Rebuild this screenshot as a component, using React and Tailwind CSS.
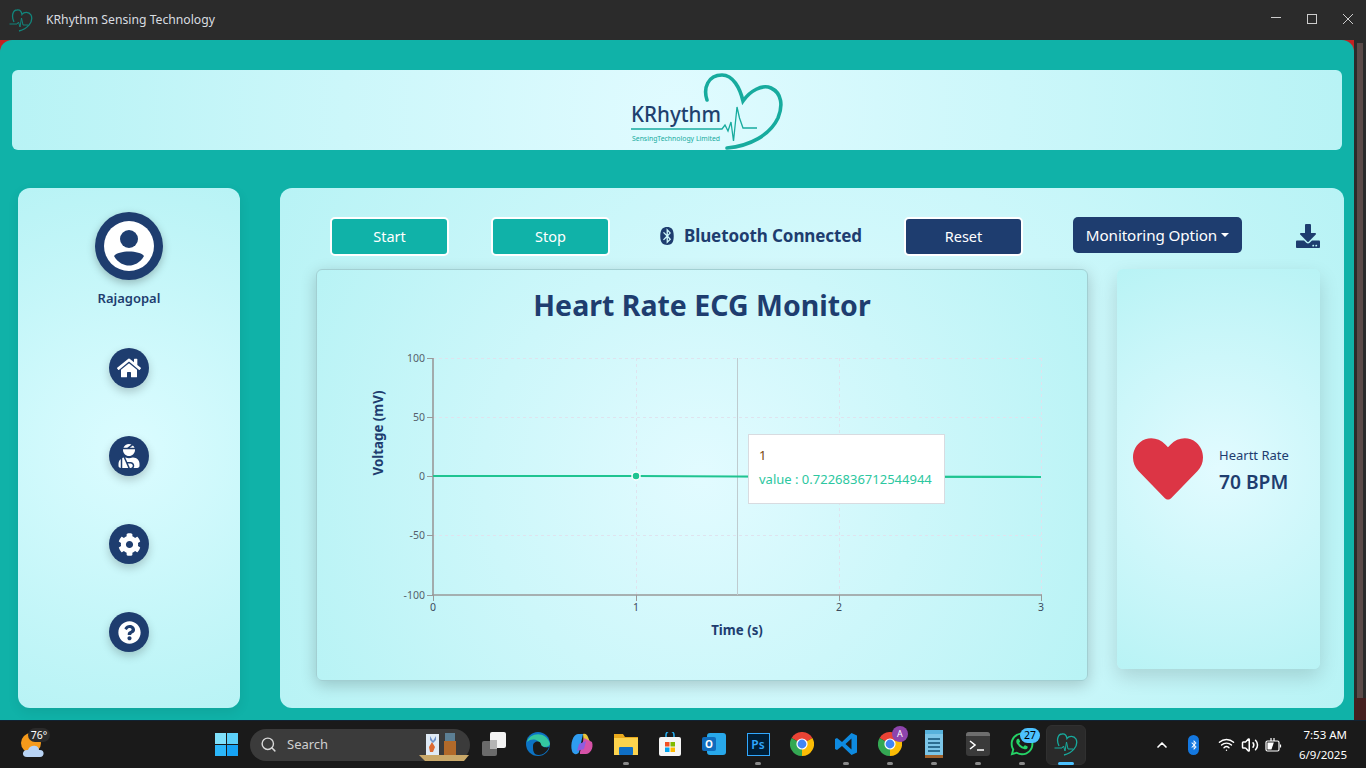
import React from "react";
import { FaHome, FaUserInjured, FaCog, FaQuestionCircle, FaDownload, FaBluetooth, FaHeart, FaWhatsapp, FaBluetoothB } from "react-icons/fa";
import { Search, Wifi, Volume2, ChevronUp } from "lucide-react";

const font = { fontFamily: '"Noto Sans", "Open Sans", sans-serif' };

function Logo({ color = "#17ab9e" }) {
  return (
    <svg width="24" height="24" viewBox="0 0 24 24" fill="none" stroke={color} strokeWidth="1.3" className="shrink-0">
      <path d="M5 14 C2 8 4 2 8 2 C11 1.5 12.5 4 13 6.5 C15 3.5 20 3.5 22 7 C25 14 18 21 10 23" />
      <path d="M0.5 16 H8 L9.5 14 L11 19 L12.5 10 L14 17 H19" strokeWidth="1" />
    </svg>
  );
}

function BrandLogo() {
  return (
    <svg width="160" height="80" viewBox="628 70 160 80" fill="none">
      <path d="M707 100 C703 88 708 75 722 75 C733 75 740 88 743 101 C750 91 762 84 771 88 C782 93 783 106 778 118 C770 135 750 146 727 148" stroke="#17ab9e" strokeWidth="3.6" strokeLinecap="round" />
      <path d="M631 129 H722 L725 125 L728 131 L731 122 L733.5 141 L737 107 L739.5 118 L743 128 H757" stroke="#17ab9e" strokeWidth="1.3" />
      <text x="631" y="122" fontSize="21" fontWeight="500" fill="#1e3f6e" textLength="90" lengthAdjust="spacingAndGlyphs" style={font}>KRhythm</text>
      <text x="632" y="141" fontSize="7" fill="#17ab9e" textLength="88" lengthAdjust="spacingAndGlyphs" style={font}>SensingTechnology Limited</text>
    </svg>
  );
}

function RoundIcon({ children }) {
  return (
    <div className="w-10 h-10 rounded-full bg-[#1e3d6f] flex items-center justify-center shadow-[0_4px_10px_rgba(0,0,0,0.2)] text-white">
      {children}
    </div>
  );
}

function Sidebar() {
  return (
    <div className="w-[222px] h-[520px] shrink-0 rounded-xl bg-[radial-gradient(circle,#dbfcff,#b8f3f5)] flex flex-col items-center pt-6 shadow-[0_4px_12px_rgba(0,0,0,0.08)]">
      <div className="w-[68px] h-[68px] rounded-full bg-[#1e3d6f] flex items-center justify-center shadow-[0_3px_8px_rgba(0,0,0,0.25)]">
        <svg width="50" height="50" viewBox="0 0 50 50">
          <circle cx="25" cy="25" r="25" fill="#fff" />
          <circle cx="25" cy="18" r="9" fill="#1e3d6f" />
          <path d="M10 35 C14 29 36 29 40 35 C36 42 30 44.5 25 44.5 C20 44.5 14 42 10 35Z" fill="#1e3d6f" />
        </svg>
      </div>
      <div className="mt-[9px] text-[13px] leading-[18px] font-semibold text-[#1e3d6f]">Rajagopal</div>
      <div className="mt-[41px] flex flex-col gap-[48px]">
        <RoundIcon><FaHome size={24} /></RoundIcon>
        <RoundIcon><FaUserInjured size={24} /></RoundIcon>
        <RoundIcon><FaCog size={23} /></RoundIcon>
        <RoundIcon><FaQuestionCircle size={23} /></RoundIcon>
      </div>
    </div>
  );
}

function Btn({ children, className }) {
  return (
    <button className={"w-[119px] h-[39px] rounded-[5px] border-2 border-white text-white text-[14.5px] flex items-center justify-center " + className}>
      {children}
    </button>
  );
}

function Chart() {
  const xs = [433, 636, 839, 1041];
  const ys = [[358, "100"], [417, "50"], [476, "0"], [535, "-50"], [595, "-100"]];
  return (
    <svg width="770" height="310" viewBox="317 340 770 310" className="block" style={font}>
      {ys.slice(0, 4).map(([y]) => (
        <line key={y} x1="433" x2="1041" y1={y + 0.5} y2={y + 0.5} stroke="#dfe3ee" strokeDasharray="3 3" />
      ))}
      {xs.slice(1).map((x) => (
        <line key={x} x1={x + 0.5} x2={x + 0.5} y1="358" y2="595" stroke="#dfe3ee" strokeDasharray="3 3" />
      ))}
      <line x1="433" x2="433" y1="358" y2="595" stroke="#999" strokeWidth="1.6" />
      <line x1="432" x2="1042" y1="595" y2="595" stroke="#999" strokeWidth="1.6" />
      {ys.map(([y, t]) => (
        <g key={t}>
          <line x1="427" x2="433" y1={y + 0.5} y2={y + 0.5} stroke="#999" />
          <text x="425" y={y + 4} textAnchor="end" fontSize="10.5" fill="#555f6b">{t}</text>
        </g>
      ))}
      {xs.map((x, i) => (
        <g key={x}>
          <line x1={x + 0.5} x2={x + 0.5} y1="595" y2="601" stroke="#999" />
          <text x={x} y="611" textAnchor="middle" fontSize="10.5" fill="#3d4a5c">{i}</text>
        </g>
      ))}
      <line x1="737.5" x2="737.5" y1="358" y2="595" stroke="#bfcbcf" />
      <path d="M433 476 H636 L737 476.5 L1041 477" stroke="#1fc491" strokeWidth="2.2" fill="none" />
      <circle cx="636" cy="476" r="4" fill="#1fc491" stroke="#fff" strokeWidth="1.5" />
      <text transform="translate(383 433) rotate(-90)" textAnchor="middle" fontSize="13.3" fontWeight="700" fill="#1e3d6f">Voltage (mV)</text>
      <text x="737" y="635" textAnchor="middle" fontSize="13.3" fontWeight="700" fill="#1e3d6f">Time (s)</text>
    </svg>
  );
}

function Panel() {
  return (
    <div className="w-[1064px] h-[520px] shrink-0 rounded-xl bg-[radial-gradient(circle,#dffbff,#b8f3f5)] pt-[29px]">
      <div className="flex items-start h-[52px]">
        <Btn className="ml-[50px] bg-[#10b2a8]">Start</Btn>
        <Btn className="ml-[42px] bg-[#10b2a8]">Stop</Btn>
        <div className="ml-[48px] w-[246px] h-[38px] flex items-center text-[#1e3d6f]">
          <FaBluetooth size={18} />
          <span className="ml-[8px] text-[17px] font-bold tracking-[-0.1px]">Bluetooth Connected</span>
        </div>
        <Btn className="bg-[#1e3d6f]">Reset</Btn>
        <button className="ml-[50px] w-[169px] h-9 rounded-[5px] bg-[#1e3d6f] text-white text-[15.2px] flex items-center justify-center tracking-[-0.1px]">
          Monitoring Option
          <span className="ml-[4px] w-0 h-0 border-x-[4.5px] border-x-transparent border-t-[4.5px] border-t-white" />
        </button>
        <div className="ml-[54px] mt-[7px] text-[#1e3d6f]"><FaDownload size={24} /></div>
      </div>
      <div className="flex items-start ml-[37px]">
        <div className="relative w-[772px] h-[412px] -ml-[1px] rounded-md border border-[#a2cfd2] bg-[radial-gradient(circle,#e2fbff,#b8f3f5)] shadow-[0_4px_16px_rgba(0,0,0,0.2)]">
          <h1 className="pt-4 h-[70px] text-center text-[28.5px] leading-[38px] font-bold text-[#1e3d6f]">Heart Rate ECG Monitor</h1>
          <Chart />
          <div className="absolute left-[431px] top-[164px] w-[197px] h-[70px] bg-white border border-[#d8dbe0] pl-[10px] pt-[10px]">
            <div className="text-[13px] leading-[20px] text-[#7a4a10]">1</div>
            <div className="mt-[5px] text-[13px] leading-[18px] text-[#2cc7a0] whitespace-nowrap">value : 0.7226836712544944</div>
          </div>
        </div>
        <div className="ml-[29px] w-[203px] h-[400px] rounded-md bg-[radial-gradient(circle,#e2fbff,#b8f3f5)] shadow-[0_8px_20px_rgba(0,0,0,0.14)] flex items-center pl-4">
          <FaHeart size={70} className="text-[#dc3545] shrink-0" />
          <div className="ml-4 pt-[3px] text-[#1e3d6f]">
            <div className="text-[13px] leading-[18px]">Heartt Rate</div>
            <div className="mt-[4px] text-[19.2px] leading-[28px] font-semibold">70 BPM</div>
          </div>
        </div>
      </div>
    </div>
  );
}

const Slot = ({ children, dot, active }) => (
  <div className={"relative w-11 h-12 shrink-0 flex items-center justify-center"}>
    {active && <div className="absolute left-[2px] top-1 w-10 h-10 rounded-md bg-[#2a2a2a] border border-[#303030]" />}
    <div className="relative flex items-center justify-center mb-[1px]">{children}</div>
    {dot && <div className="absolute left-[19px] bottom-[4px] w-[6px] h-[3px] rounded-full bg-[#8a8a8a]" />}
    {active && <div className="absolute left-[14px] bottom-[4px] w-4 h-[3px] rounded-full bg-[#4cc2ff]" />}
  </div>
);

const ChromeIcon = () => (
  <svg width="24" height="24" viewBox="0 0 24 24">
    <path d="M12 12 L22.4 6 A12 12 0 0 0 1.6 6Z" fill="#ea4335" />
    <path d="M12 12 L1.6 6 A12 12 0 0 0 12 24Z" fill="#34a853" />
    <path d="M12 12 L12 24 A12 12 0 0 0 22.4 6Z" fill="#fbbc05" />
    <circle cx="12" cy="12" r="5.6" fill="#fff" />
    <circle cx="12" cy="12" r="4.4" fill="#4285f4" />
  </svg>
);

function Taskbar() {
  return (
    <div className="h-12 bg-[#1a1a1a] flex items-center text-white shrink-0 border-t border-[#123]">
      <div className="relative w-[204px] h-12 shrink-0">
        <svg width="26" height="26" viewBox="0 0 26 26" className="absolute left-[20px] top-[11px]">
          <circle cx="11" cy="11" r="10" fill="#f59a1b" />
          <path d="M7 25 C1 25 2 17 8 18 C10 12 19 13 19 18 C25 17 25 25 20 25Z" fill="#b9d4f5" />
        </svg>
        <div className="absolute left-[28px] top-[7px] w-[22px] h-[14px] rounded-full bg-[#2a2a2a] text-[10.5px] leading-[14px] text-center">76°</div>
      </div>
      <Slot>
        <div className="grid grid-cols-2 gap-[1px] w-[23px] h-[23px]">
          <div className="bg-[#7fe0fb]" /><div className="bg-[#5cd0fa]" /><div className="bg-[#2cb7fa]" /><div className="bg-[#16a3f5]" />
        </div>
      </Slot>
      <div className="ml-[2px] w-[220px] h-8 rounded-full bg-[#3b3b3b] shrink-0 flex items-center pl-[10px] relative mr-[2px]">
        <Search size={17} className="text-[#d8d8d8]" />
        <span className="ml-[10px] text-[13px] text-[#cfcfcf]">Search</span>
        <svg width="54" height="30" viewBox="0 0 54 30" className="absolute right-[-1px] top-[2px]">
          <path d="M2 24 H52 L47 30 H8Z" fill="#c9a869" />
          <rect x="9" y="3" width="13" height="21" fill="#dfeaf5" />
          <path d="M12 16 L15 11 L18 16 L16 21 H13Z" fill="#dd6a32" />
          <path d="M13 5 L16 10 L19 5 V9 L16 12 L13 9Z" fill="#6d91c9" />
          <rect x="27" y="10" width="12" height="14" fill="#b26a2a" />
          <path d="M28 2 H38 V10 H28Z" fill="#5c7f94" />
        </svg>
      </div>
      <Slot>
        <div className="relative w-6 h-6">
          <div className="absolute left-0 bottom-0 w-[15px] h-[15px] rounded-[2px] bg-[#6b6b6b]" />
          <div className="absolute right-0 top-0 w-[16px] h-[16px] rounded-[2px] bg-[#f3f3f3]" />
          <div className="absolute left-[8px] top-[8px] w-[7px] h-[9px] bg-[#b5b5b5]" />
        </div>
      </Slot>
      <Slot>
        <svg width="24" height="24" viewBox="0 0 24 24">
          <circle cx="12" cy="12" r="12" fill="#0c73c4" />
          <path d="M1 10 C3 1 20 -2 24 12 C23 16 15 16 14 12 C13 7 5 6 1 10Z" fill="#34c6a0" />
          <path d="M7 14 C7 9 14 8 15 12 C15 15 20 16 23 15 C21 21 14 25 9 22 C7 20 7 17 7 14Z" fill="#1a1a1a" />
        </svg>
      </Slot>
      <Slot>
        <svg width="24" height="24" viewBox="0 0 24 24">
          <path d="M8 2 H13 L9 20 C8 23 3 23 2 19 C0 12 3 2 8 2Z" fill="#2f9cf0" />
          <path d="M13 2 C16 1 17 3 18 5 L22 15 L14 12Z" fill="#e8c33a" />
          <path d="M10 20 L14 6 L22 10 C24 16 20 22 16 22 H10Z" fill="#d652a8" />
          <path d="M9 12 L16 9 L14 17 L7 19Z" fill="#8f5ce0" />
        </svg>
      </Slot>
      <Slot dot>
        <svg width="24" height="24" viewBox="0 0 24 24">
          <path d="M0 2 H9 L11 5 H24 V22 H0Z" fill="#e9a91c" />
          <rect x="0" y="6" width="24" height="17" fill="#fcd34d" />
          <rect x="5" y="15" width="14" height="8" rx="1" fill="#0f6fc6" />
        </svg>
      </Slot>
      <Slot>
        <svg width="22" height="24" viewBox="0 0 22 24">
          <path d="M7 6 V3 A3 3 0 0 1 15 3 V6" stroke="#24a8e8" strokeWidth="1.6" fill="none" />
          <rect x="0" y="5" width="22" height="19" rx="2" fill="#f5f5f5" />
          <rect x="6" y="10" width="4.5" height="4.5" fill="#f25022" />
          <rect x="11.5" y="10" width="4.5" height="4.5" fill="#7fba00" />
          <rect x="6" y="15.5" width="4.5" height="4.5" fill="#00a4ef" />
          <rect x="11.5" y="15.5" width="4.5" height="4.5" fill="#ffb900" />
        </svg>
      </Slot>
      <Slot>
        <div className="relative w-6 h-6">
          <div className="absolute right-0 top-[1px] w-[19px] h-[22px] rounded-[3px] bg-[#28a8ea]" />
          <div className="absolute left-0 top-[5px] w-[14px] h-[14px] rounded-[2px] bg-[#0f6cbd] text-[10px] leading-[14px] font-bold text-center">O</div>
        </div>
      </Slot>
      <Slot dot>
        <div className="w-[23px] h-[23px] border border-[#31a8ff] bg-[#001e36] text-[#31a8ff] text-[12px] leading-[21px] font-semibold text-center">Ps</div>
      </Slot>
      <Slot><ChromeIcon /></Slot>
      <Slot dot>
        <svg width="24" height="24" viewBox="0 0 24 24">
          <path d="M17.5 1 L23 3.6 V20.4 L17.5 23 L8 14 L3 18 L1 17 V7 L3 6 L8 10Z M17.5 6.5 L11.5 12 L17.5 17.5Z" fill="#0e8ae0" fillRule="evenodd" />
        </svg>
      </Slot>
      <Slot dot>
        <div className="relative w-6 h-6">
          <ChromeIcon />
          <div className="absolute -right-[6px] -top-[6px] w-4 h-4 rounded-full bg-[#8e44ad] text-[9px] leading-4 text-center">A</div>
        </div>
      </Slot>
      <Slot dot>
        <svg width="18" height="28" viewBox="0 0 18 28">
          <rect x="0" y="3" width="18" height="24" fill="#7cc6e8" />
          <rect x="0" y="0" width="18" height="4" fill="#57b2dc" />
          <path d="M3 9 H15 M3 13 H15 M3 17 H15 M3 21 H15" stroke="#2c6e91" strokeWidth="2" />
          <rect x="0" y="25" width="18" height="3" fill="#a0622c" />
        </svg>
      </Slot>
      <Slot dot>
        <div className="w-6 h-6 rounded-[3px] bg-[#3a3a3a] overflow-hidden relative">
          <div className="h-1 bg-[#6e6e6e]" />
          <svg width="24" height="20" viewBox="0 0 24 20" className="absolute left-0 top-1">
            <path d="M4 5 L9 9 L4 13" stroke="#fff" strokeWidth="1.6" fill="none" />
            <path d="M11 14 H18" stroke="#fff" strokeWidth="1.6" />
          </svg>
        </div>
      </Slot>
      <Slot dot>
        <div className="relative">
          <FaWhatsapp size={26} className="text-[#25d366]" />
          <div className="absolute left-[11px] -top-[3px] w-[20px] h-[15px] rounded-full bg-[#4cc2ff] text-black text-[10.5px] leading-[15px] text-center">27</div>
        </div>
      </Slot>
      <Slot active><Logo /></Slot>
      <div className="ml-[66px] flex items-center">
        <ChevronUp size={16} strokeWidth={2.5} className="text-white" />
        <div className="ml-[18px] w-[11px] h-5 rounded-full bg-[#1478e0] flex items-center justify-center">
          <FaBluetoothB size={10} />
        </div>
        <Wifi size={17} className="ml-[19px]" />
        <Volume2 size={18} className="ml-[6px]" />
        <svg width="18" height="16" viewBox="0 0 18 16" fill="none" stroke="#fff" strokeWidth="1.2" className="ml-[6px]">
          <rect x="1" y="4" width="13" height="10" rx="1.5" />
          <path d="M15.5 7.5 V10.5" />
          <path d="M3 6 H8 L6 12 H3Z M6 1 V4 M9 1 V4" fill="#fff" />
        </svg>
      </div>
      <div className="ml-[16px] w-[48px] text-right text-[11.5px] leading-[20px] whitespace-nowrap">
        <div>7:53 AM</div>
        <div>6/9/2025</div>
      </div>
    </div>
  );
}

export default function App() {
  return (
    <div className="w-[1366px] h-[768px] flex flex-col overflow-hidden bg-[#1a1a1a]" style={font}>
      <div className="h-10 bg-[#2b2b2b] flex items-center shrink-0 text-[#d9dde0]">
        <div className="ml-[9px]"><Logo color="#12857c" /></div>
        <span className="ml-[13px] text-[12.2px]">KRhythm Sensing Technology</span>
        <div className="ml-auto flex items-center">
          <svg width="12" height="12" viewBox="0 0 12 12" stroke="#ccc" fill="none"><path d="M1 3.5 H11" /></svg>
          <svg width="12" height="12" viewBox="0 0 12 12" stroke="#ccc" fill="none" className="ml-[24px] -mt-[2px]"><rect x="1.5" y="1.5" width="9" height="9" /></svg>
          <svg width="12" height="12" viewBox="0 0 12 12" stroke="#ccc" fill="none" className="ml-[24px] mr-[12px] -mt-[2px]"><path d="M1 1 L11 11 M11 1 L1 11" /></svg>
        </div>
      </div>
      <div className="h-[680px] flex shrink-0">
        <div className="w-[1354px] bg-[#c42222]">
          <div className="h-full rounded-t-xl bg-[#10b2a8] px-3 pt-[30px]">
            <div className="h-20 rounded-md bg-[radial-gradient(circle,#e0fbff,#b8f3f5)] flex items-center justify-center pl-[61px]">
              <BrandLogo />
            </div>
            <div className="mt-[38px] ml-[6px] w-[1326px] flex gap-10">
              <Sidebar />
              <Panel />
            </div>
          </div>
        </div>
        <div className="w-3 bg-[#2b2b2b] flex flex-col items-center">
          <div className="mt-[3px] w-[6px] h-[655px] bg-[#5a4a48]" />
          <div className="mt-auto h-[22px] w-full bg-[#45201f]" />
        </div>
      </div>
      <Taskbar />
    </div>
  );
}
